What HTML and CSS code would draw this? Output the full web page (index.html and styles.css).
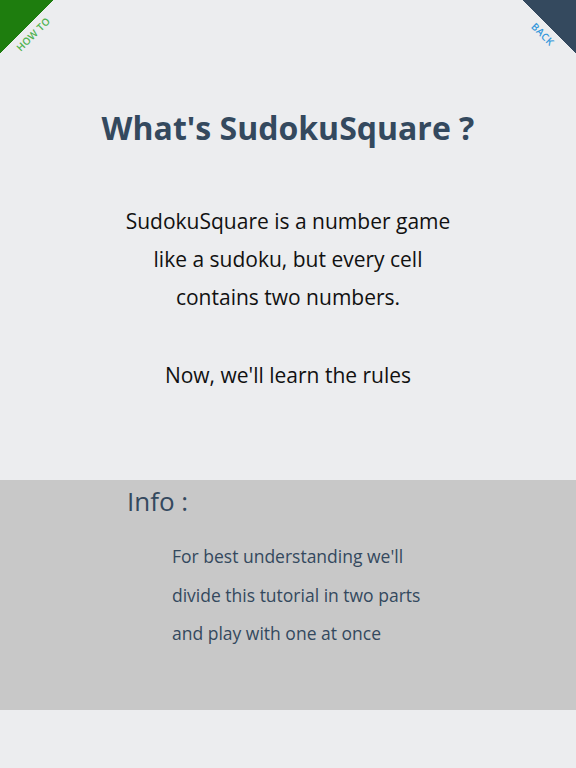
FILE: index.html
```html
<!DOCTYPE html>
<html>
<head>
<meta charset="utf-8">
<link rel="stylesheet" href="styles.css">
</head>
<body>
<div class="page">
  <div class="corner corner-left"><span>HOW TO</span></div>
  <div class="corner corner-right"><span>BACK</span></div>
  <h1 class="title">What's SudokuSquare ?</h1>
  <div class="intro">
    <p>SudokuSquare is a number game<br>like a sudoku, but every cell<br>contains two numbers.</p>
    <p class="gap">Now, we'll learn the rules</p>
  </div>
  <section class="info">
    <h2 class="info-title">Info :</h2>
    <p class="info-text">For best understanding we'll<br>divide this tutorial in two parts<br>and play with one at once</p>
  </section>
</div>
</body>
</html>
```
FILE: styles.css
```css
html, body {
  margin: 0;
  padding: 0;
}
body {
  background: #ecedef;
  font-family: "Open Sans", "Noto Sans", sans-serif;
  width: 576px;
  height: 768px;
  overflow: hidden;
}
.page {
  position: relative;
  width: 576px;
  height: 768px;
  display: flex;
  flex-direction: column;
}
.corner {
  position: absolute;
  top: 0;
  width: 54px;
  height: 54px;
}
.corner-left {
  left: 0;
  background: linear-gradient(135deg, #1e7d0e 50%, transparent 50%);
}
.corner-right {
  right: 0;
  background: linear-gradient(225deg, #34495e 50%, transparent 50%);
}
.corner span {
  position: absolute;
  top: 34px;
  font-size: 10px;
  font-weight: 600;
  white-space: nowrap;
  line-height: 12px;
  letter-spacing: 0.3px;
}
.corner-left span {
  color: #4fb24f;
  left: 33px;
  transform: translate(-50%, -50%) rotate(-45deg);
}
.corner-right span {
  color: #3498db;
  left: 21px;
  transform: translate(-50%, -50%) rotate(45deg);
}
.title {
  margin: 106px 0 0;
  text-align: center;
  color: #34495e;
  font-size: 32px;
  font-weight: 700;
  line-height: 44px;
}
.intro {
  margin-top: 52px;
  text-align: center;
  color: #111;
  font-size: 21px;
  line-height: 38px;
}
.intro p {
  margin: 0;
}
.intro .gap {
  margin-top: 40px;
}
.info {
  margin-top: 86px;
  background: #c8c8c8;
  height: 230px;
  padding: 0 0 0 127px;
  box-sizing: border-box;
  color: #34495e;
}
.info-title {
  margin: 1px 0 0;
  font-size: 26px;
  font-weight: 400;
  line-height: 40px;
}
.info-text {
  margin: 16px 0 0 45px;
  font-size: 17.5px;
  line-height: 38.5px;
}
```
